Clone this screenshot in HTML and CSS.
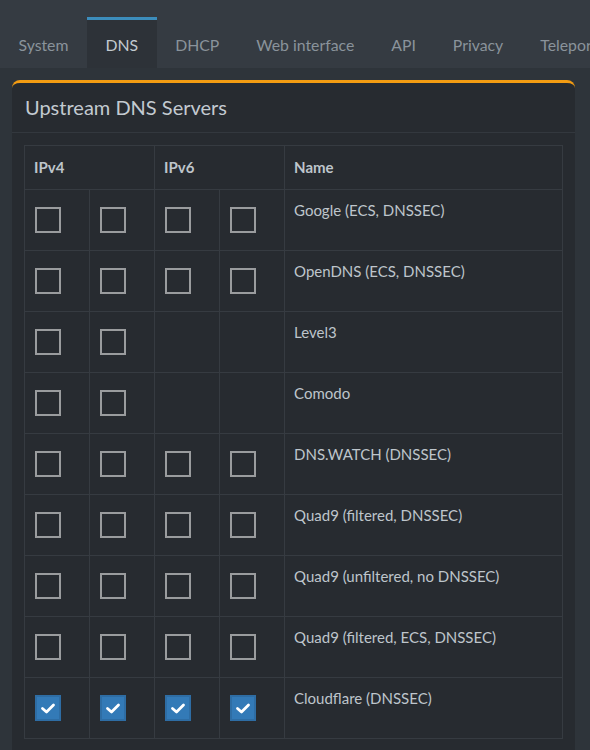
FILE: index.html
```html
<!DOCTYPE html>
<html lang="en">

	<head>
		<meta charset="UTF-8">
		<meta name="viewport" content="width=device-width, initial-scale=1.0">
		<title>Settings - DNS</title>
		<link rel="stylesheet" href="styles.css">
	</head>

	<body>
		<ul class="tabs">
			<li><a href="javascript:;">System</a></li>
			<li class="active"><a href="javascript:;">DNS</a></li>
			<li><a href="javascript:;">DHCP</a></li>
			<li><a href="javascript:;">Web interface</a></li>
			<li><a href="javascript:;">API</a></li>
			<li><a href="javascript:;">Privacy</a></li>
			<li><a href="javascript:;">Teleporter</a></li>
		</ul>
		<div class="content">
			<div class="box">
				<div class="box-header">
					<h3>Upstream DNS Servers</h3>
				</div>
				<div class="box-body">
					<table class="servers">
						<colgroup>
							<col class="c-box">
							<col class="c-box">
							<col class="c-box">
							<col class="c-box">
							<col>
						</colgroup>
						<thead>
							<tr>
								<th colspan="2">IPv4</th>
								<th colspan="2">IPv6</th>
								<th>Name</th>
							</tr>
						</thead>
						<tbody>
							<tr>
								<td><span class="cb"></span></td>
								<td><span class="cb"></span></td>
								<td><span class="cb"></span></td>
								<td><span class="cb"></span></td>
								<td>Google (ECS, DNSSEC)</td>
							</tr>
							<tr>
								<td><span class="cb"></span></td>
								<td><span class="cb"></span></td>
								<td><span class="cb"></span></td>
								<td><span class="cb"></span></td>
								<td>OpenDNS (ECS, DNSSEC)</td>
							</tr>
							<tr>
								<td><span class="cb"></span></td>
								<td><span class="cb"></span></td>
								<td></td>
								<td></td>
								<td>Level3</td>
							</tr>
							<tr>
								<td><span class="cb"></span></td>
								<td><span class="cb"></span></td>
								<td></td>
								<td></td>
								<td>Comodo</td>
							</tr>
							<tr>
								<td><span class="cb"></span></td>
								<td><span class="cb"></span></td>
								<td><span class="cb"></span></td>
								<td><span class="cb"></span></td>
								<td>DNS.WATCH (DNSSEC)</td>
							</tr>
							<tr>
								<td><span class="cb"></span></td>
								<td><span class="cb"></span></td>
								<td><span class="cb"></span></td>
								<td><span class="cb"></span></td>
								<td>Quad9 (filtered, DNSSEC)</td>
							</tr>
							<tr>
								<td><span class="cb"></span></td>
								<td><span class="cb"></span></td>
								<td><span class="cb"></span></td>
								<td><span class="cb"></span></td>
								<td>Quad9 (unfiltered, no DNSSEC)</td>
							</tr>
							<tr>
								<td><span class="cb"></span></td>
								<td><span class="cb"></span></td>
								<td><span class="cb"></span></td>
								<td><span class="cb"></span></td>
								<td>Quad9 (filtered, ECS, DNSSEC)</td>
							</tr>
							<tr>
								<td><span class="cb on"><svg viewBox="0 0 22 22"><polyline points="5.5,11.5 9.5,15 16.5,8"/></svg></span></td>
								<td><span class="cb on"><svg viewBox="0 0 22 22"><polyline points="5.5,11.5 9.5,15 16.5,8"/></svg></span></td>
								<td><span class="cb on"><svg viewBox="0 0 22 22"><polyline points="5.5,11.5 9.5,15 16.5,8"/></svg></span></td>
								<td><span class="cb on"><svg viewBox="0 0 22 22"><polyline points="5.5,11.5 9.5,15 16.5,8"/></svg></span></td>
								<td>Cloudflare (DNSSEC)</td>
							</tr>
						</tbody>
					</table>
				</div>
			</div>
		</div>
	</body>

</html>
```

FILE: styles.css
```css
* {
	margin: 0;
	padding: 0;
	box-sizing: border-box;
	list-style: none;
}

body {
	background: #2e343a;
	color: #bec5cb;
	font-family: Lato, "Liberation Sans", sans-serif;
	font-size: 15px;
	overflow: hidden;
}

/* tab bar */
.tabs {
	display: flex;
	height: 68px;
	padding-top: 17px;
	background: #353b42;
	white-space: nowrap;
	overflow: hidden;
}

.tabs li {
	flex: none;
	border-top: 3px solid transparent;
}

.tabs a {
	display: block;
	height: 48px;
	padding: 15px 18.5px 0;
	color: #8a939b;
	font-size: 15.8px;
	text-decoration: none;
}

.tabs li.active {
	border-top-color: #3c8dbc;
	background: #2d3238;
}

.tabs li.active a {
	color: #c3cad0;
}

/* box */
.content {
	padding: 12px 15px 0 12px;
}

.box {
	background: #272b30;
	border-top: 3px solid #f39c12;
	border-radius: 8px 8px 0 0;
	height: 700px;
}

.box-header {
	height: 50px;
	padding: 12px 13px 0;
	border-bottom: 1px solid #33383e;
}

.box-header h3 {
	font-size: 20px;
	font-weight: normal;
	color: #c3cad0;
}

.box-body {
	padding: 12px;
}

/* server table */
.servers {
	width: 539px;
	border-collapse: collapse;
	table-layout: fixed;
}

.servers .c-box {
	width: 65px;
}

.servers th,
.servers td {
	border: 1px solid #363b41;
	text-align: left;
	vertical-align: top;
	padding: 11px 10px 11px 9px;
}

.servers th {
	height: 44px;
	padding-top: 12px;
	font-weight: bold;
}

.servers td {
	height: 61px;
}

.cb {
	display: block;
	width: 26px;
	height: 26px;
	margin: 6px 0 0 1px;
	border: 2px solid #9a9c9e;
}

.cb.on {
	background: #337ab7;
	border-color: #2e6da4;
}

.cb svg {
	display: block;
	width: 22px;
	height: 22px;
	fill: none;
	stroke: #fff;
	stroke-width: 2.8;
	stroke-linecap: round;
	stroke-linejoin: round;
}
```
